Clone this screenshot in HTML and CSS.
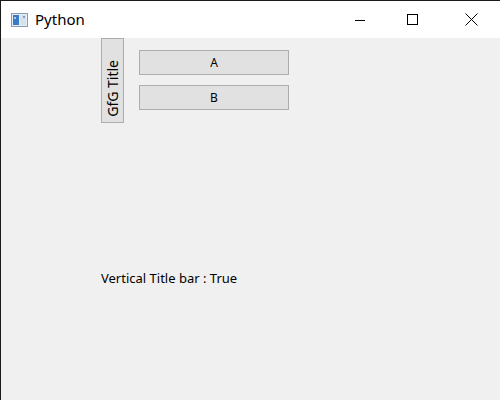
FILE: index.html
```html
<!DOCTYPE html>
<html>
<head>
<meta charset="utf-8">
<link rel="stylesheet" href="styles.css">
</head>
<body>
<div class="window">
  <div class="titlebar">
    <div class="app">
      <svg class="appicon" width="17" height="14" viewBox="0 0 17 14">
        <rect x="0.5" y="0.5" width="16" height="13" fill="#e8eef5" stroke="#8a9bb0"/>
        <rect x="2" y="2" width="6" height="10" fill="#3a7bc8"/>
        <rect x="9" y="2" width="6" height="10" fill="#d6e2ee"/>
        <rect x="3" y="4" width="2" height="2" fill="#a8c8ee"/>
        <rect x="12" y="3" width="2" height="2" fill="#7a9cc0"/>
      </svg>
      <span class="apptitle">Python</span>
    </div>
    <div class="controls">
      <div class="ctl ctl-min">
        <svg width="12" height="12" viewBox="0 0 12 12"><line x1="1" y1="6.5" x2="11" y2="6.5" stroke="#000" stroke-width="1"/></svg>
      </div>
      <div class="ctl ctl-max">
        <svg width="12" height="12" viewBox="0 0 12 12"><rect x="0.5" y="0.5" width="10" height="10" fill="none" stroke="#000" stroke-width="1"/></svg>
      </div>
      <div class="ctl ctl-close">
        <svg width="13" height="13" viewBox="0 0 13 13"><path d="M0.5 0.5 L12.5 12.5 M12.5 0.5 L0.5 12.5" stroke="#000" stroke-width="1" fill="none"/></svg>
      </div>
    </div>
  </div>
  <div class="content">
    <div class="top">
      <div class="dock-title"><span>GfG Title</span></div>
      <div class="buttons">
        <button class="btn">A</button>
        <button class="btn">B</button>
      </div>
    </div>
    <div class="label">Vertical Title bar : True</div>
  </div>
</div>
</body>
</html>
```
FILE: styles.css
```css
html, body {
  margin: 0;
  padding: 0;
}
body {
  width: 500px;
  height: 400px;
  overflow: hidden;
  font-family: "Liberation Sans", Arial, sans-serif;
}
.window {
  width: 499px;
  height: 399px;
  border-top: 1px solid #1a1a1a;
  border-left: 1px solid #1a1a1a;
  display: flex;
  flex-direction: column;
  background: #f0f0f0;
}
.titlebar {
  height: 37px;
  background: #fff;
  display: flex;
  justify-content: space-between;
  align-items: center;
}
.app {
  display: flex;
  align-items: center;
  padding-left: 10px;
}
.appicon {
  display: block;
}
.apptitle {
  margin-left: 7px;
  font-family: "Noto Sans", sans-serif;
  font-size: 15px;
  color: #000;
  position: relative;
  top: -1px;
}
.controls {
  display: flex;
  height: 100%;
  padding-right: 6px;
}
.ctl {
  width: 46px;
  display: flex;
  align-items: center;
  justify-content: center;
}
.ctl-max { margin-left: 7px; }
.ctl-close { margin-left: 12px; }
.ctl svg { display: block; }
.content {
  flex: 1;
  display: flex;
  flex-direction: column;
  padding-left: 100px;
}
.top {
  display: flex;
  align-items: flex-start;
}
.dock-title {
  width: 21px;
  height: 83px;
  background: #e1e1e1;
  border: 1px solid #adadad;
  display: flex;
  align-items: flex-end;
  justify-content: center;
  box-sizing: content-box;
}
.dock-title span {
  writing-mode: vertical-rl;
  transform: rotate(180deg);
  font-family: "Noto Sans", sans-serif;
  font-size: 14px;
  color: #000;
  white-space: nowrap;
  margin-bottom: 5px;
}
.buttons {
  display: flex;
  flex-direction: column;
  gap: 10px;
  margin-left: 15px;
  margin-top: 12px;
}
.btn {
  width: 150px;
  height: 25px;
  margin: 0;
  padding: 0;
  background: #e1e1e1;
  border: 1px solid #adadad;
  border-radius: 0;
  font-family: "Noto Sans", sans-serif;
  font-size: 12px;
  color: #000;
}
.label {
  margin-top: 146px;
  font-family: "Noto Sans", sans-serif;
  font-size: 13px;
  color: #000;
}
```
